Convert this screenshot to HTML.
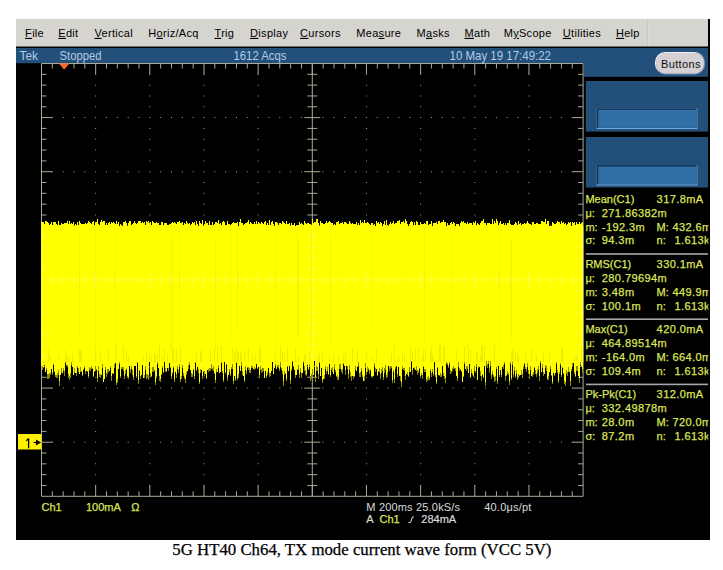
<!DOCTYPE html>
<html><head><meta charset="utf-8"><style>
html,body{margin:0;padding:0;background:#fff;width:723px;height:570px;overflow:hidden}
svg{position:absolute;left:0;top:0;display:block}
</style></head><body>
<svg width="723" height="570" viewBox="0 0 723 570">
<rect x="16" y="19" width="694" height="521" fill="#000"/><rect x="16" y="19" width="692" height="27.5" fill="#d6d4ce"/><rect x="647" y="19" width="1" height="27" fill="#cac8c2"/><rect x="648" y="19" width="1" height="27" fill="#dcdad4"/><rect x="16" y="48" width="692" height="15.2" fill="#22507a"/><rect x="583.8" y="48" width="124.2" height="28.8" fill="#22507a"/><rect x="585.8" y="81" width="122.2" height="50.599999999999994" fill="#22507a"/><rect x="596.6" y="108.3" width="100.8" height="20.700000000000003" fill="#70a8e0"/><rect x="596.6" y="108.3" width="100" height="19.500000000000004" fill="#173a60"/><rect x="598.4" y="110.0" width="98.2" height="17.800000000000004" fill="#3070a8"/><rect x="585.8" y="137" width="122.2" height="50.5" fill="#22507a"/><rect x="596.6" y="165" width="100.8" height="20.5" fill="#70a8e0"/><rect x="596.6" y="165" width="100" height="19.3" fill="#173a60"/><rect x="598.4" y="166.7" width="98.2" height="17.6" fill="#3070a8"/><rect x="655.5" y="52.5" width="49.5" height="22" rx="10" ry="10" fill="#4a6a90"/><rect x="655" y="52" width="49.5" height="22" rx="10" ry="10" fill="#f0f0f4"/><rect x="656" y="53" width="49" height="21.5" rx="10" ry="10" fill="#7a8aa0"/><rect x="656" y="53" width="48" height="20.5" rx="9.5" ry="9.5" fill="#d4d0d4"/><path d="M41.5 63.5H583.0999999999999V496.3H41.5ZM312.29999999999995 63.5V496.3M41.5 279.9H583.0999999999999M52.33 63.5v5M52.33 496.3v-5M52.33 274.9v10M63.16 63.5v5M63.16 496.3v-5M63.16 274.9v10M74.00 63.5v5M74.00 496.3v-5M74.00 274.9v10M84.83 63.5v5M84.83 496.3v-5M84.83 274.9v10M95.66 63.5v11M95.66 496.3v-11M95.66 271.9v16M106.49 63.5v5M106.49 496.3v-5M106.49 274.9v10M117.32 63.5v5M117.32 496.3v-5M117.32 274.9v10M128.16 63.5v5M128.16 496.3v-5M128.16 274.9v10M138.99 63.5v5M138.99 496.3v-5M138.99 274.9v10M149.82 63.5v11M149.82 496.3v-11M149.82 271.9v16M160.65 63.5v5M160.65 496.3v-5M160.65 274.9v10M171.48 63.5v5M171.48 496.3v-5M171.48 274.9v10M182.32 63.5v5M182.32 496.3v-5M182.32 274.9v10M193.15 63.5v5M193.15 496.3v-5M193.15 274.9v10M203.98 63.5v11M203.98 496.3v-11M203.98 271.9v16M214.81 63.5v5M214.81 496.3v-5M214.81 274.9v10M225.64 63.5v5M225.64 496.3v-5M225.64 274.9v10M236.48 63.5v5M236.48 496.3v-5M236.48 274.9v10M247.31 63.5v5M247.31 496.3v-5M247.31 274.9v10M258.14 63.5v11M258.14 496.3v-11M258.14 271.9v16M268.97 63.5v5M268.97 496.3v-5M268.97 274.9v10M279.80 63.5v5M279.80 496.3v-5M279.80 274.9v10M290.64 63.5v5M290.64 496.3v-5M290.64 274.9v10M301.47 63.5v5M301.47 496.3v-5M301.47 274.9v10M312.30 63.5v11M312.30 496.3v-11M312.30 271.9v16M323.13 63.5v5M323.13 496.3v-5M323.13 274.9v10M333.96 63.5v5M333.96 496.3v-5M333.96 274.9v10M344.80 63.5v5M344.80 496.3v-5M344.80 274.9v10M355.63 63.5v5M355.63 496.3v-5M355.63 274.9v10M366.46 63.5v11M366.46 496.3v-11M366.46 271.9v16M377.29 63.5v5M377.29 496.3v-5M377.29 274.9v10M388.12 63.5v5M388.12 496.3v-5M388.12 274.9v10M398.96 63.5v5M398.96 496.3v-5M398.96 274.9v10M409.79 63.5v5M409.79 496.3v-5M409.79 274.9v10M420.62 63.5v11M420.62 496.3v-11M420.62 271.9v16M431.45 63.5v5M431.45 496.3v-5M431.45 274.9v10M442.28 63.5v5M442.28 496.3v-5M442.28 274.9v10M453.12 63.5v5M453.12 496.3v-5M453.12 274.9v10M463.95 63.5v5M463.95 496.3v-5M463.95 274.9v10M474.78 63.5v11M474.78 496.3v-11M474.78 271.9v16M485.61 63.5v5M485.61 496.3v-5M485.61 274.9v10M496.44 63.5v5M496.44 496.3v-5M496.44 274.9v10M507.28 63.5v5M507.28 496.3v-5M507.28 274.9v10M518.11 63.5v5M518.11 496.3v-5M518.11 274.9v10M528.94 63.5v11M528.94 496.3v-11M528.94 271.9v16M539.77 63.5v5M539.77 496.3v-5M539.77 274.9v10M550.60 63.5v5M550.60 496.3v-5M550.60 274.9v10M561.44 63.5v5M561.44 496.3v-5M561.44 274.9v10M572.27 63.5v5M572.27 496.3v-5M572.27 274.9v10M41.5 74.32h5M583.0999999999999 74.32h-5M307.29999999999995 74.32h10M41.5 85.14h5M583.0999999999999 85.14h-5M307.29999999999995 85.14h10M41.5 95.96h5M583.0999999999999 95.96h-5M307.29999999999995 95.96h10M41.5 106.78h5M583.0999999999999 106.78h-5M307.29999999999995 106.78h10M41.5 117.60h11M583.0999999999999 117.60h-11M304.29999999999995 117.60h16M41.5 128.42h5M583.0999999999999 128.42h-5M307.29999999999995 128.42h10M41.5 139.24h5M583.0999999999999 139.24h-5M307.29999999999995 139.24h10M41.5 150.06h5M583.0999999999999 150.06h-5M307.29999999999995 150.06h10M41.5 160.88h5M583.0999999999999 160.88h-5M307.29999999999995 160.88h10M41.5 171.70h11M583.0999999999999 171.70h-11M304.29999999999995 171.70h16M41.5 182.52h5M583.0999999999999 182.52h-5M307.29999999999995 182.52h10M41.5 193.34h5M583.0999999999999 193.34h-5M307.29999999999995 193.34h10M41.5 204.16h5M583.0999999999999 204.16h-5M307.29999999999995 204.16h10M41.5 214.98h5M583.0999999999999 214.98h-5M307.29999999999995 214.98h10M41.5 225.80h11M583.0999999999999 225.80h-11M304.29999999999995 225.80h16M41.5 236.62h5M583.0999999999999 236.62h-5M307.29999999999995 236.62h10M41.5 247.44h5M583.0999999999999 247.44h-5M307.29999999999995 247.44h10M41.5 258.26h5M583.0999999999999 258.26h-5M307.29999999999995 258.26h10M41.5 269.08h5M583.0999999999999 269.08h-5M307.29999999999995 269.08h10M41.5 279.90h11M583.0999999999999 279.90h-11M304.29999999999995 279.90h16M41.5 290.72h5M583.0999999999999 290.72h-5M307.29999999999995 290.72h10M41.5 301.54h5M583.0999999999999 301.54h-5M307.29999999999995 301.54h10M41.5 312.36h5M583.0999999999999 312.36h-5M307.29999999999995 312.36h10M41.5 323.18h5M583.0999999999999 323.18h-5M307.29999999999995 323.18h10M41.5 334.00h11M583.0999999999999 334.00h-11M304.29999999999995 334.00h16M41.5 344.82h5M583.0999999999999 344.82h-5M307.29999999999995 344.82h10M41.5 355.64h5M583.0999999999999 355.64h-5M307.29999999999995 355.64h10M41.5 366.46h5M583.0999999999999 366.46h-5M307.29999999999995 366.46h10M41.5 377.28h5M583.0999999999999 377.28h-5M307.29999999999995 377.28h10M41.5 388.10h11M583.0999999999999 388.10h-11M304.29999999999995 388.10h16M41.5 398.92h5M583.0999999999999 398.92h-5M307.29999999999995 398.92h10M41.5 409.74h5M583.0999999999999 409.74h-5M307.29999999999995 409.74h10M41.5 420.56h5M583.0999999999999 420.56h-5M307.29999999999995 420.56h10M41.5 431.38h5M583.0999999999999 431.38h-5M307.29999999999995 431.38h10M41.5 442.20h11M583.0999999999999 442.20h-11M304.29999999999995 442.20h16M41.5 453.02h5M583.0999999999999 453.02h-5M307.29999999999995 453.02h10M41.5 463.84h5M583.0999999999999 463.84h-5M307.29999999999995 463.84h10M41.5 474.66h5M583.0999999999999 474.66h-5M307.29999999999995 474.66h10M41.5 485.48h5M583.0999999999999 485.48h-5M307.29999999999995 485.48h10" stroke="#aaaa96" stroke-width="1.0" fill="none"/><path d="M95.16 73.82h1v1h-1zM95.16 84.64h1v1h-1zM95.16 95.46h1v1h-1zM95.16 106.28h1v1h-1zM95.16 127.92h1v1h-1zM95.16 138.74h1v1h-1zM95.16 149.56h1v1h-1zM95.16 160.38h1v1h-1zM95.16 182.02h1v1h-1zM95.16 192.84h1v1h-1zM95.16 203.66h1v1h-1zM95.16 214.48h1v1h-1zM95.16 236.12h1v1h-1zM95.16 246.94h1v1h-1zM95.16 257.76h1v1h-1zM95.16 268.58h1v1h-1zM95.16 290.22h1v1h-1zM95.16 301.04h1v1h-1zM95.16 311.86h1v1h-1zM95.16 322.68h1v1h-1zM95.16 344.32h1v1h-1zM95.16 355.14h1v1h-1zM95.16 365.96h1v1h-1zM95.16 376.78h1v1h-1zM95.16 398.42h1v1h-1zM95.16 409.24h1v1h-1zM95.16 420.06h1v1h-1zM95.16 430.88h1v1h-1zM95.16 452.52h1v1h-1zM95.16 463.34h1v1h-1zM95.16 474.16h1v1h-1zM95.16 484.98h1v1h-1zM149.32 73.82h1v1h-1zM149.32 84.64h1v1h-1zM149.32 95.46h1v1h-1zM149.32 106.28h1v1h-1zM149.32 127.92h1v1h-1zM149.32 138.74h1v1h-1zM149.32 149.56h1v1h-1zM149.32 160.38h1v1h-1zM149.32 182.02h1v1h-1zM149.32 192.84h1v1h-1zM149.32 203.66h1v1h-1zM149.32 214.48h1v1h-1zM149.32 236.12h1v1h-1zM149.32 246.94h1v1h-1zM149.32 257.76h1v1h-1zM149.32 268.58h1v1h-1zM149.32 290.22h1v1h-1zM149.32 301.04h1v1h-1zM149.32 311.86h1v1h-1zM149.32 322.68h1v1h-1zM149.32 344.32h1v1h-1zM149.32 355.14h1v1h-1zM149.32 365.96h1v1h-1zM149.32 376.78h1v1h-1zM149.32 398.42h1v1h-1zM149.32 409.24h1v1h-1zM149.32 420.06h1v1h-1zM149.32 430.88h1v1h-1zM149.32 452.52h1v1h-1zM149.32 463.34h1v1h-1zM149.32 474.16h1v1h-1zM149.32 484.98h1v1h-1zM203.48 73.82h1v1h-1zM203.48 84.64h1v1h-1zM203.48 95.46h1v1h-1zM203.48 106.28h1v1h-1zM203.48 127.92h1v1h-1zM203.48 138.74h1v1h-1zM203.48 149.56h1v1h-1zM203.48 160.38h1v1h-1zM203.48 182.02h1v1h-1zM203.48 192.84h1v1h-1zM203.48 203.66h1v1h-1zM203.48 214.48h1v1h-1zM203.48 236.12h1v1h-1zM203.48 246.94h1v1h-1zM203.48 257.76h1v1h-1zM203.48 268.58h1v1h-1zM203.48 290.22h1v1h-1zM203.48 301.04h1v1h-1zM203.48 311.86h1v1h-1zM203.48 322.68h1v1h-1zM203.48 344.32h1v1h-1zM203.48 355.14h1v1h-1zM203.48 365.96h1v1h-1zM203.48 376.78h1v1h-1zM203.48 398.42h1v1h-1zM203.48 409.24h1v1h-1zM203.48 420.06h1v1h-1zM203.48 430.88h1v1h-1zM203.48 452.52h1v1h-1zM203.48 463.34h1v1h-1zM203.48 474.16h1v1h-1zM203.48 484.98h1v1h-1zM257.64 73.82h1v1h-1zM257.64 84.64h1v1h-1zM257.64 95.46h1v1h-1zM257.64 106.28h1v1h-1zM257.64 127.92h1v1h-1zM257.64 138.74h1v1h-1zM257.64 149.56h1v1h-1zM257.64 160.38h1v1h-1zM257.64 182.02h1v1h-1zM257.64 192.84h1v1h-1zM257.64 203.66h1v1h-1zM257.64 214.48h1v1h-1zM257.64 236.12h1v1h-1zM257.64 246.94h1v1h-1zM257.64 257.76h1v1h-1zM257.64 268.58h1v1h-1zM257.64 290.22h1v1h-1zM257.64 301.04h1v1h-1zM257.64 311.86h1v1h-1zM257.64 322.68h1v1h-1zM257.64 344.32h1v1h-1zM257.64 355.14h1v1h-1zM257.64 365.96h1v1h-1zM257.64 376.78h1v1h-1zM257.64 398.42h1v1h-1zM257.64 409.24h1v1h-1zM257.64 420.06h1v1h-1zM257.64 430.88h1v1h-1zM257.64 452.52h1v1h-1zM257.64 463.34h1v1h-1zM257.64 474.16h1v1h-1zM257.64 484.98h1v1h-1zM365.96 73.82h1v1h-1zM365.96 84.64h1v1h-1zM365.96 95.46h1v1h-1zM365.96 106.28h1v1h-1zM365.96 127.92h1v1h-1zM365.96 138.74h1v1h-1zM365.96 149.56h1v1h-1zM365.96 160.38h1v1h-1zM365.96 182.02h1v1h-1zM365.96 192.84h1v1h-1zM365.96 203.66h1v1h-1zM365.96 214.48h1v1h-1zM365.96 236.12h1v1h-1zM365.96 246.94h1v1h-1zM365.96 257.76h1v1h-1zM365.96 268.58h1v1h-1zM365.96 290.22h1v1h-1zM365.96 301.04h1v1h-1zM365.96 311.86h1v1h-1zM365.96 322.68h1v1h-1zM365.96 344.32h1v1h-1zM365.96 355.14h1v1h-1zM365.96 365.96h1v1h-1zM365.96 376.78h1v1h-1zM365.96 398.42h1v1h-1zM365.96 409.24h1v1h-1zM365.96 420.06h1v1h-1zM365.96 430.88h1v1h-1zM365.96 452.52h1v1h-1zM365.96 463.34h1v1h-1zM365.96 474.16h1v1h-1zM365.96 484.98h1v1h-1zM420.12 73.82h1v1h-1zM420.12 84.64h1v1h-1zM420.12 95.46h1v1h-1zM420.12 106.28h1v1h-1zM420.12 127.92h1v1h-1zM420.12 138.74h1v1h-1zM420.12 149.56h1v1h-1zM420.12 160.38h1v1h-1zM420.12 182.02h1v1h-1zM420.12 192.84h1v1h-1zM420.12 203.66h1v1h-1zM420.12 214.48h1v1h-1zM420.12 236.12h1v1h-1zM420.12 246.94h1v1h-1zM420.12 257.76h1v1h-1zM420.12 268.58h1v1h-1zM420.12 290.22h1v1h-1zM420.12 301.04h1v1h-1zM420.12 311.86h1v1h-1zM420.12 322.68h1v1h-1zM420.12 344.32h1v1h-1zM420.12 355.14h1v1h-1zM420.12 365.96h1v1h-1zM420.12 376.78h1v1h-1zM420.12 398.42h1v1h-1zM420.12 409.24h1v1h-1zM420.12 420.06h1v1h-1zM420.12 430.88h1v1h-1zM420.12 452.52h1v1h-1zM420.12 463.34h1v1h-1zM420.12 474.16h1v1h-1zM420.12 484.98h1v1h-1zM474.28 73.82h1v1h-1zM474.28 84.64h1v1h-1zM474.28 95.46h1v1h-1zM474.28 106.28h1v1h-1zM474.28 127.92h1v1h-1zM474.28 138.74h1v1h-1zM474.28 149.56h1v1h-1zM474.28 160.38h1v1h-1zM474.28 182.02h1v1h-1zM474.28 192.84h1v1h-1zM474.28 203.66h1v1h-1zM474.28 214.48h1v1h-1zM474.28 236.12h1v1h-1zM474.28 246.94h1v1h-1zM474.28 257.76h1v1h-1zM474.28 268.58h1v1h-1zM474.28 290.22h1v1h-1zM474.28 301.04h1v1h-1zM474.28 311.86h1v1h-1zM474.28 322.68h1v1h-1zM474.28 344.32h1v1h-1zM474.28 355.14h1v1h-1zM474.28 365.96h1v1h-1zM474.28 376.78h1v1h-1zM474.28 398.42h1v1h-1zM474.28 409.24h1v1h-1zM474.28 420.06h1v1h-1zM474.28 430.88h1v1h-1zM474.28 452.52h1v1h-1zM474.28 463.34h1v1h-1zM474.28 474.16h1v1h-1zM474.28 484.98h1v1h-1zM528.44 73.82h1v1h-1zM528.44 84.64h1v1h-1zM528.44 95.46h1v1h-1zM528.44 106.28h1v1h-1zM528.44 127.92h1v1h-1zM528.44 138.74h1v1h-1zM528.44 149.56h1v1h-1zM528.44 160.38h1v1h-1zM528.44 182.02h1v1h-1zM528.44 192.84h1v1h-1zM528.44 203.66h1v1h-1zM528.44 214.48h1v1h-1zM528.44 236.12h1v1h-1zM528.44 246.94h1v1h-1zM528.44 257.76h1v1h-1zM528.44 268.58h1v1h-1zM528.44 290.22h1v1h-1zM528.44 301.04h1v1h-1zM528.44 311.86h1v1h-1zM528.44 322.68h1v1h-1zM528.44 344.32h1v1h-1zM528.44 355.14h1v1h-1zM528.44 365.96h1v1h-1zM528.44 376.78h1v1h-1zM528.44 398.42h1v1h-1zM528.44 409.24h1v1h-1zM528.44 420.06h1v1h-1zM528.44 430.88h1v1h-1zM528.44 452.52h1v1h-1zM528.44 463.34h1v1h-1zM528.44 474.16h1v1h-1zM528.44 484.98h1v1h-1zM51.83 117.10h1v1h-1zM62.66 117.10h1v1h-1zM73.50 117.10h1v1h-1zM84.33 117.10h1v1h-1zM105.99 117.10h1v1h-1zM116.82 117.10h1v1h-1zM127.66 117.10h1v1h-1zM138.49 117.10h1v1h-1zM160.15 117.10h1v1h-1zM170.98 117.10h1v1h-1zM181.82 117.10h1v1h-1zM192.65 117.10h1v1h-1zM214.31 117.10h1v1h-1zM225.14 117.10h1v1h-1zM235.98 117.10h1v1h-1zM246.81 117.10h1v1h-1zM268.47 117.10h1v1h-1zM279.30 117.10h1v1h-1zM290.14 117.10h1v1h-1zM300.97 117.10h1v1h-1zM322.63 117.10h1v1h-1zM333.46 117.10h1v1h-1zM344.30 117.10h1v1h-1zM355.13 117.10h1v1h-1zM376.79 117.10h1v1h-1zM387.62 117.10h1v1h-1zM398.46 117.10h1v1h-1zM409.29 117.10h1v1h-1zM430.95 117.10h1v1h-1zM441.78 117.10h1v1h-1zM452.62 117.10h1v1h-1zM463.45 117.10h1v1h-1zM485.11 117.10h1v1h-1zM495.94 117.10h1v1h-1zM506.78 117.10h1v1h-1zM517.61 117.10h1v1h-1zM539.27 117.10h1v1h-1zM550.10 117.10h1v1h-1zM560.94 117.10h1v1h-1zM571.77 117.10h1v1h-1zM51.83 171.20h1v1h-1zM62.66 171.20h1v1h-1zM73.50 171.20h1v1h-1zM84.33 171.20h1v1h-1zM105.99 171.20h1v1h-1zM116.82 171.20h1v1h-1zM127.66 171.20h1v1h-1zM138.49 171.20h1v1h-1zM160.15 171.20h1v1h-1zM170.98 171.20h1v1h-1zM181.82 171.20h1v1h-1zM192.65 171.20h1v1h-1zM214.31 171.20h1v1h-1zM225.14 171.20h1v1h-1zM235.98 171.20h1v1h-1zM246.81 171.20h1v1h-1zM268.47 171.20h1v1h-1zM279.30 171.20h1v1h-1zM290.14 171.20h1v1h-1zM300.97 171.20h1v1h-1zM322.63 171.20h1v1h-1zM333.46 171.20h1v1h-1zM344.30 171.20h1v1h-1zM355.13 171.20h1v1h-1zM376.79 171.20h1v1h-1zM387.62 171.20h1v1h-1zM398.46 171.20h1v1h-1zM409.29 171.20h1v1h-1zM430.95 171.20h1v1h-1zM441.78 171.20h1v1h-1zM452.62 171.20h1v1h-1zM463.45 171.20h1v1h-1zM485.11 171.20h1v1h-1zM495.94 171.20h1v1h-1zM506.78 171.20h1v1h-1zM517.61 171.20h1v1h-1zM539.27 171.20h1v1h-1zM550.10 171.20h1v1h-1zM560.94 171.20h1v1h-1zM571.77 171.20h1v1h-1zM51.83 225.30h1v1h-1zM62.66 225.30h1v1h-1zM73.50 225.30h1v1h-1zM84.33 225.30h1v1h-1zM105.99 225.30h1v1h-1zM116.82 225.30h1v1h-1zM127.66 225.30h1v1h-1zM138.49 225.30h1v1h-1zM160.15 225.30h1v1h-1zM170.98 225.30h1v1h-1zM181.82 225.30h1v1h-1zM192.65 225.30h1v1h-1zM214.31 225.30h1v1h-1zM225.14 225.30h1v1h-1zM235.98 225.30h1v1h-1zM246.81 225.30h1v1h-1zM268.47 225.30h1v1h-1zM279.30 225.30h1v1h-1zM290.14 225.30h1v1h-1zM300.97 225.30h1v1h-1zM322.63 225.30h1v1h-1zM333.46 225.30h1v1h-1zM344.30 225.30h1v1h-1zM355.13 225.30h1v1h-1zM376.79 225.30h1v1h-1zM387.62 225.30h1v1h-1zM398.46 225.30h1v1h-1zM409.29 225.30h1v1h-1zM430.95 225.30h1v1h-1zM441.78 225.30h1v1h-1zM452.62 225.30h1v1h-1zM463.45 225.30h1v1h-1zM485.11 225.30h1v1h-1zM495.94 225.30h1v1h-1zM506.78 225.30h1v1h-1zM517.61 225.30h1v1h-1zM539.27 225.30h1v1h-1zM550.10 225.30h1v1h-1zM560.94 225.30h1v1h-1zM571.77 225.30h1v1h-1zM51.83 333.50h1v1h-1zM62.66 333.50h1v1h-1zM73.50 333.50h1v1h-1zM84.33 333.50h1v1h-1zM105.99 333.50h1v1h-1zM116.82 333.50h1v1h-1zM127.66 333.50h1v1h-1zM138.49 333.50h1v1h-1zM160.15 333.50h1v1h-1zM170.98 333.50h1v1h-1zM181.82 333.50h1v1h-1zM192.65 333.50h1v1h-1zM214.31 333.50h1v1h-1zM225.14 333.50h1v1h-1zM235.98 333.50h1v1h-1zM246.81 333.50h1v1h-1zM268.47 333.50h1v1h-1zM279.30 333.50h1v1h-1zM290.14 333.50h1v1h-1zM300.97 333.50h1v1h-1zM322.63 333.50h1v1h-1zM333.46 333.50h1v1h-1zM344.30 333.50h1v1h-1zM355.13 333.50h1v1h-1zM376.79 333.50h1v1h-1zM387.62 333.50h1v1h-1zM398.46 333.50h1v1h-1zM409.29 333.50h1v1h-1zM430.95 333.50h1v1h-1zM441.78 333.50h1v1h-1zM452.62 333.50h1v1h-1zM463.45 333.50h1v1h-1zM485.11 333.50h1v1h-1zM495.94 333.50h1v1h-1zM506.78 333.50h1v1h-1zM517.61 333.50h1v1h-1zM539.27 333.50h1v1h-1zM550.10 333.50h1v1h-1zM560.94 333.50h1v1h-1zM571.77 333.50h1v1h-1zM51.83 387.60h1v1h-1zM62.66 387.60h1v1h-1zM73.50 387.60h1v1h-1zM84.33 387.60h1v1h-1zM105.99 387.60h1v1h-1zM116.82 387.60h1v1h-1zM127.66 387.60h1v1h-1zM138.49 387.60h1v1h-1zM160.15 387.60h1v1h-1zM170.98 387.60h1v1h-1zM181.82 387.60h1v1h-1zM192.65 387.60h1v1h-1zM214.31 387.60h1v1h-1zM225.14 387.60h1v1h-1zM235.98 387.60h1v1h-1zM246.81 387.60h1v1h-1zM268.47 387.60h1v1h-1zM279.30 387.60h1v1h-1zM290.14 387.60h1v1h-1zM300.97 387.60h1v1h-1zM322.63 387.60h1v1h-1zM333.46 387.60h1v1h-1zM344.30 387.60h1v1h-1zM355.13 387.60h1v1h-1zM376.79 387.60h1v1h-1zM387.62 387.60h1v1h-1zM398.46 387.60h1v1h-1zM409.29 387.60h1v1h-1zM430.95 387.60h1v1h-1zM441.78 387.60h1v1h-1zM452.62 387.60h1v1h-1zM463.45 387.60h1v1h-1zM485.11 387.60h1v1h-1zM495.94 387.60h1v1h-1zM506.78 387.60h1v1h-1zM517.61 387.60h1v1h-1zM539.27 387.60h1v1h-1zM550.10 387.60h1v1h-1zM560.94 387.60h1v1h-1zM571.77 387.60h1v1h-1zM51.83 441.70h1v1h-1zM62.66 441.70h1v1h-1zM73.50 441.70h1v1h-1zM84.33 441.70h1v1h-1zM105.99 441.70h1v1h-1zM116.82 441.70h1v1h-1zM127.66 441.70h1v1h-1zM138.49 441.70h1v1h-1zM160.15 441.70h1v1h-1zM170.98 441.70h1v1h-1zM181.82 441.70h1v1h-1zM192.65 441.70h1v1h-1zM214.31 441.70h1v1h-1zM225.14 441.70h1v1h-1zM235.98 441.70h1v1h-1zM246.81 441.70h1v1h-1zM268.47 441.70h1v1h-1zM279.30 441.70h1v1h-1zM290.14 441.70h1v1h-1zM300.97 441.70h1v1h-1zM322.63 441.70h1v1h-1zM333.46 441.70h1v1h-1zM344.30 441.70h1v1h-1zM355.13 441.70h1v1h-1zM376.79 441.70h1v1h-1zM387.62 441.70h1v1h-1zM398.46 441.70h1v1h-1zM409.29 441.70h1v1h-1zM430.95 441.70h1v1h-1zM441.78 441.70h1v1h-1zM452.62 441.70h1v1h-1zM463.45 441.70h1v1h-1zM485.11 441.70h1v1h-1zM495.94 441.70h1v1h-1zM506.78 441.70h1v1h-1zM517.61 441.70h1v1h-1zM539.27 441.70h1v1h-1zM550.10 441.70h1v1h-1zM560.94 441.70h1v1h-1zM571.77 441.70h1v1h-1zM95.16 117.10h1v1h-1zM95.16 171.20h1v1h-1zM95.16 225.30h1v1h-1zM95.16 333.50h1v1h-1zM95.16 387.60h1v1h-1zM95.16 441.70h1v1h-1zM149.32 117.10h1v1h-1zM149.32 171.20h1v1h-1zM149.32 225.30h1v1h-1zM149.32 333.50h1v1h-1zM149.32 387.60h1v1h-1zM149.32 441.70h1v1h-1zM203.48 117.10h1v1h-1zM203.48 171.20h1v1h-1zM203.48 225.30h1v1h-1zM203.48 333.50h1v1h-1zM203.48 387.60h1v1h-1zM203.48 441.70h1v1h-1zM257.64 117.10h1v1h-1zM257.64 171.20h1v1h-1zM257.64 225.30h1v1h-1zM257.64 333.50h1v1h-1zM257.64 387.60h1v1h-1zM257.64 441.70h1v1h-1zM365.96 117.10h1v1h-1zM365.96 171.20h1v1h-1zM365.96 225.30h1v1h-1zM365.96 333.50h1v1h-1zM365.96 387.60h1v1h-1zM365.96 441.70h1v1h-1zM420.12 117.10h1v1h-1zM420.12 171.20h1v1h-1zM420.12 225.30h1v1h-1zM420.12 333.50h1v1h-1zM420.12 387.60h1v1h-1zM420.12 441.70h1v1h-1zM474.28 117.10h1v1h-1zM474.28 171.20h1v1h-1zM474.28 225.30h1v1h-1zM474.28 333.50h1v1h-1zM474.28 387.60h1v1h-1zM474.28 441.70h1v1h-1zM528.44 117.10h1v1h-1zM528.44 171.20h1v1h-1zM528.44 225.30h1v1h-1zM528.44 333.50h1v1h-1zM528.44 387.60h1v1h-1zM528.44 441.70h1v1h-1z" fill="#a0a090"/><path d="M42.5 366V370M43.5 367V368M46.5 368V370M47.5 374V379M48.5 374V379M49.5 373V378M50.5 373V375M52.5 373V375M53.5 364V365M55.5 375V377M56.5 375V378M57.5 373V378M58.5 370V375M59.5 381V386M61.5 368V373M63.5 368V371M64.5 371V376M65.5 362V363M66.5 365V366M67.5 365V367M68.5 374V378M69.5 376V380M70.5 373V378M71.5 362V365M74.5 368V373M76.5 373V376M77.5 366V368M78.5 368V372M80.5 367V372M81.5 371V372M82.5 375V376M83.5 369V370M84.5 366V368M85.5 371V374M87.5 371V372M88.5 376V378M89.5 367V370M90.5 368V371M91.5 366V369M92.5 368V369M93.5 376V377M94.5 371V372M95.5 366V371M96.5 369V370M97.5 378V382M98.5 366V371M99.5 374V377M100.5 374V378M102.5 364V368M105.5 367V370M106.5 373V377M107.5 369V374M108.5 369V372M110.5 366V368M111.5 376V381M112.5 373V374M113.5 373V374M114.5 364V368M116.5 382V385M117.5 379V383M119.5 362V364M120.5 376V378M121.5 367V369M122.5 367V369M123.5 367V371M124.5 376V379M125.5 370V374M126.5 368V370M127.5 376V378M128.5 377V379M130.5 369V373M131.5 366V369M132.5 370V375M133.5 377V380M136.5 376V378M137.5 362V363M138.5 380V384M139.5 370V371M140.5 376V379M144.5 375V378M145.5 366V370M146.5 374V379M147.5 374V378M148.5 375V380M149.5 361V362M150.5 373V377M151.5 376V377M152.5 367V372M153.5 367V372M154.5 370V371M155.5 382V385M156.5 376V378M157.5 362V364M159.5 376V381M160.5 379V382M161.5 374V375M162.5 366V368M163.5 372V373M164.5 361V362M165.5 368V372M166.5 371V372M168.5 368V371M170.5 367V368M171.5 376V379M172.5 372V374M173.5 366V368M174.5 379V382M176.5 374V378M177.5 366V369M178.5 370V373M179.5 364V367M180.5 379V382M181.5 376V379M182.5 365V368M183.5 373V376M184.5 377V379M185.5 379V383M186.5 372V375M188.5 365V369M189.5 362V365M191.5 373V377M192.5 374V377M193.5 369V370M194.5 376V379M195.5 362V363M196.5 370V371M198.5 369V373M199.5 382V384M200.5 369V373M202.5 376V379M203.5 371V372M204.5 371V376M206.5 378V379M208.5 369V372M209.5 368V371M210.5 368V371M211.5 364V369M212.5 368V370M213.5 366V371M214.5 373V374M215.5 380V383M216.5 369V372M218.5 365V368M221.5 361V363M222.5 371V373M223.5 380V382M225.5 372V374M226.5 364V365M227.5 377V381M229.5 369V372M230.5 374V376M231.5 367V369M232.5 364V369M233.5 381V384M235.5 379V381M236.5 362V363M237.5 378V380M238.5 374V378M241.5 362V366M242.5 371V375M244.5 380V382M245.5 366V370M246.5 371V374M247.5 367V368M248.5 367V370M249.5 368V373M250.5 370V373M251.5 366V368M252.5 366V368M254.5 367V370M255.5 368V369M257.5 368V369M259.5 375V378M260.5 366V370M261.5 369V373M262.5 368V372M263.5 368V371M266.5 376V378M267.5 372V375M269.5 373V377M270.5 373V376M275.5 364V366M277.5 365V367M278.5 365V368M279.5 369V371M280.5 362V367M281.5 368V370M282.5 371V374M283.5 381V386M284.5 371V375M285.5 373V374M286.5 379V381M287.5 366V367M290.5 380V384M291.5 369V371M292.5 361V362M293.5 366V367M295.5 375V378M297.5 369V370M298.5 365V370M299.5 374V378M300.5 368V372M301.5 373V378M303.5 361V363M304.5 366V371M305.5 370V375M306.5 374V376M308.5 369V370M309.5 364V366M310.5 376V381M311.5 374V379M312.5 369V373M315.5 377V382M316.5 366V371M317.5 367V371M318.5 374V379M319.5 362V363M322.5 380V383M324.5 375V379M325.5 366V369M326.5 371V374M327.5 367V371M328.5 374V375M330.5 375V377M331.5 368V370M332.5 367V372M334.5 364V369M335.5 370V372M336.5 376V377M337.5 375V380M338.5 377V380M339.5 364V369M340.5 364V369M341.5 370V372M342.5 369V374M343.5 363V364M345.5 370V375M347.5 366V369M348.5 374V379M349.5 365V370M350.5 372V377M351.5 376V381M353.5 376V379M354.5 376V377M355.5 366V370M358.5 362V366M359.5 373V377M360.5 372V377M361.5 368V371M362.5 375V377M364.5 376V381M365.5 363V368M366.5 372V375M367.5 367V372M368.5 368V370M369.5 370V374M370.5 369V371M371.5 376V377M372.5 376V378M374.5 363V366M375.5 368V372M377.5 375V376M378.5 371V372M379.5 368V372M380.5 374V379M381.5 369V373M382.5 367V371M383.5 377V380M384.5 368V373M385.5 365V370M386.5 375V378M387.5 372V377M389.5 367V371M390.5 366V369M391.5 366V368M392.5 380V383M393.5 370V372M394.5 379V383M395.5 367V369M397.5 374V377M400.5 376V381M401.5 382V387M402.5 366V369M403.5 368V370M404.5 368V371M405.5 376V380M407.5 372V375M408.5 376V377M409.5 367V372M411.5 361V362M412.5 370V375M414.5 367V369M416.5 366V371M417.5 370V375M418.5 371V373M419.5 368V369M420.5 376V377M421.5 373V375M422.5 375V379M423.5 366V367M424.5 369V372M425.5 369V372M426.5 379V382M427.5 377V381M428.5 376V380M429.5 378V380M430.5 369V371M431.5 373V377M432.5 369V372M433.5 374V376M435.5 375V377M436.5 382V384M437.5 367V368M439.5 375V376M440.5 373V377M441.5 375V377M443.5 373V376M444.5 376V379M445.5 378V383M446.5 362V364M447.5 363V365M448.5 366V368M449.5 362V364M450.5 370V374M451.5 371V373M452.5 368V371M453.5 366V369M454.5 368V369M455.5 368V371M457.5 378V381M458.5 362V367M459.5 368V371M460.5 369V370M461.5 371V372M463.5 376V377M464.5 362V364M466.5 366V371M467.5 366V369M470.5 377V378M471.5 369V373M472.5 373V375M473.5 376V377M474.5 366V371M475.5 371V373M476.5 364V367M478.5 366V368M480.5 371V376M481.5 376V381M482.5 374V375M483.5 377V378M485.5 382V386M486.5 361V366M487.5 364V368M488.5 361V364M489.5 368V373M490.5 361V366M491.5 375V379M492.5 371V374M493.5 375V377M494.5 377V382M495.5 376V381M496.5 367V369M497.5 381V384M499.5 375V377M501.5 375V377M503.5 365V369M504.5 362V364M505.5 376V381M506.5 375V376M507.5 371V374M508.5 373V375M509.5 381V385M510.5 362V364M511.5 378V380M512.5 361V365M513.5 374V377M514.5 367V371M515.5 376V378M516.5 370V374M517.5 377V380M518.5 374V378M519.5 375V376M521.5 370V375M522.5 374V378M523.5 366V369M524.5 363V364M525.5 367V369M526.5 369V372M527.5 363V367M528.5 370V374M529.5 374V379M530.5 366V370M532.5 374V377M533.5 372V375M534.5 367V368M535.5 370V374M536.5 374V377M537.5 369V373M538.5 366V370M539.5 376V381M540.5 361V363M542.5 364V368M543.5 372V376M545.5 365V368M546.5 366V371M547.5 378V380M548.5 376V380M550.5 366V369M551.5 375V376M552.5 382V384M554.5 375V376M556.5 362V364M557.5 370V373M558.5 381V383M559.5 372V374M560.5 363V365M561.5 375V377M562.5 367V368M563.5 373V374M564.5 381V384M565.5 382V386M566.5 370V374M567.5 372V376M568.5 367V372M570.5 381V386M571.5 369V371M572.5 363V367M574.5 372V374M575.5 376V377M576.5 366V371M577.5 366V371M579.5 378V383M580.5 362V365M582.5 369V373" stroke="#8c8c00" stroke-width="1" fill="none"/><path d="M41.5 222V366M42.5 222V366M43.5 222V367M44.5 224V365M45.5 221V372M46.5 221V368M47.5 222V374M48.5 223V374M49.5 225V373M50.5 224V373M51.5 222V369M52.5 225V373M53.5 222V364M54.5 222V372M55.5 222V375M56.5 224V375M57.5 225V373M58.5 221V370M59.5 225V381M60.5 225V375M61.5 223V368M62.5 224V373M63.5 224V368M64.5 223V371M65.5 223V362M66.5 223V365M67.5 221V365M68.5 224V374M69.5 221V376M70.5 224V373M71.5 223V362M72.5 224V367M73.5 222V375M74.5 226V368M75.5 224V373M76.5 225V373M77.5 222V366M78.5 225V368M79.5 221V374M80.5 223V367M81.5 224V371M82.5 224V375M83.5 224V369M84.5 224V366M85.5 223V371M86.5 224V371M87.5 223V371M88.5 221V376M89.5 222V367M90.5 223V368M91.5 224V366M92.5 222V368M93.5 221V376M94.5 225V371M95.5 222V366M96.5 222V369M97.5 219V378M98.5 224V366M99.5 225V374M100.5 222V374M101.5 220V375M102.5 222V364M103.5 221V382M104.5 221V379M105.5 225V367M106.5 223V373M107.5 225V369M108.5 223V369M109.5 222V371M110.5 224V366M111.5 222V376M112.5 223V373M113.5 222V373M114.5 223V364M115.5 224V363M116.5 221V382M117.5 224V379M118.5 222V369M119.5 227V362M120.5 224V376M121.5 225V367M122.5 226V367M123.5 222V367M124.5 222V376M125.5 221V370M126.5 223V368M127.5 226V376M128.5 223V377M129.5 221V366M130.5 221V369M131.5 225V366M132.5 224V370M133.5 223V377M134.5 221V366M135.5 223V366M136.5 224V376M137.5 223V362M138.5 221V380M139.5 221V370M140.5 221V376M141.5 223V375M142.5 222V365M143.5 223V378M144.5 222V375M145.5 225V366M146.5 221V374M147.5 222V374M148.5 221V375M149.5 223V361M150.5 222V373M151.5 225V376M152.5 221V367M153.5 222V367M154.5 223V370M155.5 223V382M156.5 222V376M157.5 223V362M158.5 223V368M159.5 225V376M160.5 225V379M161.5 222V374M162.5 222V366M163.5 225V372M164.5 223V361M165.5 223V368M166.5 223V371M167.5 225V368M168.5 225V368M169.5 224V363M170.5 224V367M171.5 223V376M172.5 222V372M173.5 223V366M174.5 222V379M175.5 223V372M176.5 224V374M177.5 222V366M178.5 222V370M179.5 221V364M180.5 223V379M181.5 223V376M182.5 222V365M183.5 225V373M184.5 223V377M185.5 224V379M186.5 221V372M187.5 223V371M188.5 224V365M189.5 223V362M190.5 225V370M191.5 224V373M192.5 222V374M193.5 223V369M194.5 222V376M195.5 225V362M196.5 221V370M197.5 224V367M198.5 226V369M199.5 221V382M200.5 223V369M201.5 224V370M202.5 220V376M203.5 226V371M204.5 224V371M205.5 221V374M206.5 223V378M207.5 223V370M208.5 225V369M209.5 221V368M210.5 225V368M211.5 225V364M212.5 222V368M213.5 225V366M214.5 224V373M215.5 222V380M216.5 222V369M217.5 223V372M218.5 220V365M219.5 224V373M220.5 223V372M221.5 225V361M222.5 222V371M223.5 221V380M224.5 222V362M225.5 225V372M226.5 225V364M227.5 221V377M228.5 224V375M229.5 224V369M230.5 225V374M231.5 224V367M232.5 223V364M233.5 222V381M234.5 223V376M235.5 223V379M236.5 223V362M237.5 222V378M238.5 227V374M239.5 222V366M240.5 219V371M241.5 223V362M242.5 223V371M243.5 225V376M244.5 224V380M245.5 223V366M246.5 223V371M247.5 222V367M248.5 220V367M249.5 224V368M250.5 222V370M251.5 223V366M252.5 224V366M253.5 224V369M254.5 222V367M255.5 224V368M256.5 221V364M257.5 224V368M258.5 222V367M259.5 223V375M260.5 224V366M261.5 222V369M262.5 223V368M263.5 224V368M264.5 222V378M265.5 221V371M266.5 225V376M267.5 223V372M268.5 225V368M269.5 220V373M270.5 225V373M271.5 222V371M272.5 221V362M273.5 224V374M274.5 228V368M275.5 222V364M276.5 222V369M277.5 223V365M278.5 225V365M279.5 223V369M280.5 223V362M281.5 224V368M282.5 221V371M283.5 222V381M284.5 223V371M285.5 224V373M286.5 221V379M287.5 224V366M288.5 224V371M289.5 223V366M290.5 227V380M291.5 223V369M292.5 225V361M293.5 225V366M294.5 223V370M295.5 227V375M296.5 225V375M297.5 225V369M298.5 225V365M299.5 222V374M300.5 224V368M301.5 223V373M302.5 224V373M303.5 225V361M304.5 221V366M305.5 223V370M306.5 224V374M307.5 223V365M308.5 223V369M309.5 224V364M310.5 224V376M311.5 225V374M312.5 219V369M313.5 223V375M314.5 222V361M315.5 222V377M316.5 219V366M317.5 219V367M318.5 223V374M319.5 228V362M320.5 221V376M321.5 223V368M322.5 223V380M323.5 224V379M324.5 224V375M325.5 223V366M326.5 221V371M327.5 223V367M328.5 222V374M329.5 221V364M330.5 222V375M331.5 223V368M332.5 223V367M333.5 225V374M334.5 224V364M335.5 225V370M336.5 222V376M337.5 222V375M338.5 221V377M339.5 224V364M340.5 223V364M341.5 223V370M342.5 222V369M343.5 224V363M344.5 222V366M345.5 222V370M346.5 223V366M347.5 224V366M348.5 224V374M349.5 221V365M350.5 223V372M351.5 224V376M352.5 223V376M353.5 224V376M354.5 224V376M355.5 224V366M356.5 222V371M357.5 225V367M358.5 223V362M359.5 225V373M360.5 220V372M361.5 223V368M362.5 222V375M363.5 223V381M364.5 220V376M365.5 223V363M366.5 223V372M367.5 222V367M368.5 223V368M369.5 224V370M370.5 225V369M371.5 223V376M372.5 223V376M373.5 225V376M374.5 224V363M375.5 227V368M376.5 221V369M377.5 223V375M378.5 222V371M379.5 224V368M380.5 222V374M381.5 223V369M382.5 228V367M383.5 224V377M384.5 221V368M385.5 225V365M386.5 220V375M387.5 225V372M388.5 227V366M389.5 224V367M390.5 222V366M391.5 224V366M392.5 223V380M393.5 221V370M394.5 224V379M395.5 223V367M396.5 223V366M397.5 221V374M398.5 221V367M399.5 220V376M400.5 224V376M401.5 222V382M402.5 222V366M403.5 221V368M404.5 223V368M405.5 219V376M406.5 221V374M407.5 224V372M408.5 228V376M409.5 224V367M410.5 222V372M411.5 221V361M412.5 222V370M413.5 225V368M414.5 222V367M415.5 225V370M416.5 221V366M417.5 222V370M418.5 225V371M419.5 225V368M420.5 222V376M421.5 224V373M422.5 224V375M423.5 224V366M424.5 223V369M425.5 224V369M426.5 221V379M427.5 221V377M428.5 225V376M429.5 224V378M430.5 224V369M431.5 221V373M432.5 227V369M433.5 223V374M434.5 223V362M435.5 223V375M436.5 222V382M437.5 224V367M438.5 221V375M439.5 221V375M440.5 223V373M441.5 222V375M442.5 222V366M443.5 220V373M444.5 222V376M445.5 222V378M446.5 228V362M447.5 223V363M448.5 225V366M449.5 225V362M450.5 223V370M451.5 222V371M452.5 224V368M453.5 222V366M454.5 223V368M455.5 227V368M456.5 224V376M457.5 224V378M458.5 224V362M459.5 228V368M460.5 223V369M461.5 221V371M462.5 222V382M463.5 221V376M464.5 223V362M465.5 223V369M466.5 224V366M467.5 222V366M468.5 224V373M469.5 223V364M470.5 223V377M471.5 223V369M472.5 225V373M473.5 222V376M474.5 223V366M475.5 221V371M476.5 225V364M477.5 223V380M478.5 224V366M479.5 225V367M480.5 223V371M481.5 221V376M482.5 221V374M483.5 219V377M484.5 223V366M485.5 223V382M486.5 225V361M487.5 223V364M488.5 223V361M489.5 223V368M490.5 224V361M491.5 224V375M492.5 219V371M493.5 224V375M494.5 221V377M495.5 223V376M496.5 219V367M497.5 221V381M498.5 225V366M499.5 223V375M500.5 221V370M501.5 224V375M502.5 224V367M503.5 223V365M504.5 225V362M505.5 223V376M506.5 225V375M507.5 223V371M508.5 223V373M509.5 220V381M510.5 224V362M511.5 225V378M512.5 225V361M513.5 225V374M514.5 224V367M515.5 222V376M516.5 223V370M517.5 225V377M518.5 221V374M519.5 224V375M520.5 223V375M521.5 225V370M522.5 224V374M523.5 224V366M524.5 223V363M525.5 224V367M526.5 223V369M527.5 221V363M528.5 223V370M529.5 224V374M530.5 224V366M531.5 225V376M532.5 222V374M533.5 222V372M534.5 224V367M535.5 224V370M536.5 223V374M537.5 223V369M538.5 224V366M539.5 224V376M540.5 224V361M541.5 221V372M542.5 221V364M543.5 222V372M544.5 222V374M545.5 219V365M546.5 224V366M547.5 221V378M548.5 221V376M549.5 226V372M550.5 228V366M551.5 226V375M552.5 222V382M553.5 223V373M554.5 224V375M555.5 224V373M556.5 223V362M557.5 221V370M558.5 222V381M559.5 222V372M560.5 224V363M561.5 221V375M562.5 223V367M563.5 222V373M564.5 224V381M565.5 223V382M566.5 225V370M567.5 224V372M568.5 222V367M569.5 223V372M570.5 222V381M571.5 226V369M572.5 222V363M573.5 223V363M574.5 222V372M575.5 225V376M576.5 222V366M577.5 224V366M578.5 224V376M579.5 222V378M580.5 224V362M581.5 223V366M582.5 222V369" stroke="#ffff00" stroke-width="1" fill="none"/><rect x="41" y="226" width="542.1" height="135" fill="#ffff00"/><path d="M79.5 233V336M95.5 232V356M115.5 235V357M170.5 240V351M172.5 235V344M179.5 231V334M215.5 239V351M230.5 226V342M237.5 231V330M275.5 236V353M297.5 227V334M298.5 240V339M311.5 229V351M330.5 235V346M371.5 229V330M424.5 227V343M452.5 232V334M499.5 232V349M510.5 240V343M511.5 238V337" stroke="#f4f400" stroke-width="1" fill="none"/><path d="M48.5 350V362M50.5 356V362M58.5 355V362M65.5 350V362M66.5 355V362M67.5 356V362M69.5 356V362M72.5 354V362M79.5 349V362M80.5 349V362M81.5 350V362M95.5 350V362M100.5 350V362M108.5 349V362M116.5 346V362M123.5 346V362M126.5 351V362M128.5 355V362M143.5 355V362M146.5 353V362M149.5 353V362M151.5 356V362M154.5 352V362M155.5 354V362M157.5 354V362M159.5 346V362M162.5 356V362M164.5 349V362M167.5 354V362M172.5 345V362M173.5 349V362M176.5 349V362M180.5 345V362M196.5 351V362M200.5 353V362M201.5 348V362M210.5 350V362M214.5 348V362M217.5 346V362M221.5 346V362M232.5 348V362M234.5 354V362M235.5 348V362M237.5 350V362M238.5 352V362M240.5 351V362M241.5 354V362M244.5 350V362M248.5 347V362M252.5 354V362M255.5 355V362M259.5 345V362M260.5 350V362M275.5 355V362M280.5 345V362M282.5 351V362M284.5 354V362M287.5 349V362M295.5 347V362M298.5 356V362M304.5 355V362M305.5 353V362M309.5 352V362M317.5 356V362M319.5 353V362M322.5 352V362M329.5 355V362M333.5 354V362M338.5 356V362M343.5 353V362M345.5 353V362M352.5 347V362M357.5 351V362M366.5 353V362M372.5 356V362M376.5 347V362M391.5 354V362M394.5 346V362M398.5 355V362M402.5 352V362M404.5 355V362M410.5 345V362M412.5 351V362M415.5 349V362M418.5 348V362M422.5 356V362M423.5 350V362M425.5 348V362M430.5 351V362M431.5 347V362M432.5 354V362M433.5 356V362M439.5 346V362M440.5 345V362M443.5 345V362M444.5 347V362M456.5 350V362M464.5 347V362M468.5 345V362M470.5 350V362M476.5 351V362M477.5 353V362M480.5 356V362M481.5 347V362M482.5 345V362M484.5 346V362M494.5 345V362M511.5 353V362M512.5 350V362M513.5 348V362M515.5 352V362M517.5 354V362M518.5 355V362M525.5 352V362M531.5 349V362M536.5 355V362M543.5 352V362M549.5 350V362M561.5 347V362M562.5 347V362M574.5 355V362M576.5 355V362M581.5 349V362" stroke="#ecec00" stroke-width="1" fill="none"/><path d="M41.5 63.5H583.0999999999999V496.3H41.5ZM312.29999999999995 63.5V496.3M41.5 279.9H583.0999999999999M52.33 63.5v5M52.33 496.3v-5M52.33 274.9v10M63.16 63.5v5M63.16 496.3v-5M63.16 274.9v10M74.00 63.5v5M74.00 496.3v-5M74.00 274.9v10M84.83 63.5v5M84.83 496.3v-5M84.83 274.9v10M95.66 63.5v11M95.66 496.3v-11M95.66 271.9v16M106.49 63.5v5M106.49 496.3v-5M106.49 274.9v10M117.32 63.5v5M117.32 496.3v-5M117.32 274.9v10M128.16 63.5v5M128.16 496.3v-5M128.16 274.9v10M138.99 63.5v5M138.99 496.3v-5M138.99 274.9v10M149.82 63.5v11M149.82 496.3v-11M149.82 271.9v16M160.65 63.5v5M160.65 496.3v-5M160.65 274.9v10M171.48 63.5v5M171.48 496.3v-5M171.48 274.9v10M182.32 63.5v5M182.32 496.3v-5M182.32 274.9v10M193.15 63.5v5M193.15 496.3v-5M193.15 274.9v10M203.98 63.5v11M203.98 496.3v-11M203.98 271.9v16M214.81 63.5v5M214.81 496.3v-5M214.81 274.9v10M225.64 63.5v5M225.64 496.3v-5M225.64 274.9v10M236.48 63.5v5M236.48 496.3v-5M236.48 274.9v10M247.31 63.5v5M247.31 496.3v-5M247.31 274.9v10M258.14 63.5v11M258.14 496.3v-11M258.14 271.9v16M268.97 63.5v5M268.97 496.3v-5M268.97 274.9v10M279.80 63.5v5M279.80 496.3v-5M279.80 274.9v10M290.64 63.5v5M290.64 496.3v-5M290.64 274.9v10M301.47 63.5v5M301.47 496.3v-5M301.47 274.9v10M312.30 63.5v11M312.30 496.3v-11M312.30 271.9v16M323.13 63.5v5M323.13 496.3v-5M323.13 274.9v10M333.96 63.5v5M333.96 496.3v-5M333.96 274.9v10M344.80 63.5v5M344.80 496.3v-5M344.80 274.9v10M355.63 63.5v5M355.63 496.3v-5M355.63 274.9v10M366.46 63.5v11M366.46 496.3v-11M366.46 271.9v16M377.29 63.5v5M377.29 496.3v-5M377.29 274.9v10M388.12 63.5v5M388.12 496.3v-5M388.12 274.9v10M398.96 63.5v5M398.96 496.3v-5M398.96 274.9v10M409.79 63.5v5M409.79 496.3v-5M409.79 274.9v10M420.62 63.5v11M420.62 496.3v-11M420.62 271.9v16M431.45 63.5v5M431.45 496.3v-5M431.45 274.9v10M442.28 63.5v5M442.28 496.3v-5M442.28 274.9v10M453.12 63.5v5M453.12 496.3v-5M453.12 274.9v10M463.95 63.5v5M463.95 496.3v-5M463.95 274.9v10M474.78 63.5v11M474.78 496.3v-11M474.78 271.9v16M485.61 63.5v5M485.61 496.3v-5M485.61 274.9v10M496.44 63.5v5M496.44 496.3v-5M496.44 274.9v10M507.28 63.5v5M507.28 496.3v-5M507.28 274.9v10M518.11 63.5v5M518.11 496.3v-5M518.11 274.9v10M528.94 63.5v11M528.94 496.3v-11M528.94 271.9v16M539.77 63.5v5M539.77 496.3v-5M539.77 274.9v10M550.60 63.5v5M550.60 496.3v-5M550.60 274.9v10M561.44 63.5v5M561.44 496.3v-5M561.44 274.9v10M572.27 63.5v5M572.27 496.3v-5M572.27 274.9v10M41.5 74.32h5M583.0999999999999 74.32h-5M307.29999999999995 74.32h10M41.5 85.14h5M583.0999999999999 85.14h-5M307.29999999999995 85.14h10M41.5 95.96h5M583.0999999999999 95.96h-5M307.29999999999995 95.96h10M41.5 106.78h5M583.0999999999999 106.78h-5M307.29999999999995 106.78h10M41.5 117.60h11M583.0999999999999 117.60h-11M304.29999999999995 117.60h16M41.5 128.42h5M583.0999999999999 128.42h-5M307.29999999999995 128.42h10M41.5 139.24h5M583.0999999999999 139.24h-5M307.29999999999995 139.24h10M41.5 150.06h5M583.0999999999999 150.06h-5M307.29999999999995 150.06h10M41.5 160.88h5M583.0999999999999 160.88h-5M307.29999999999995 160.88h10M41.5 171.70h11M583.0999999999999 171.70h-11M304.29999999999995 171.70h16M41.5 182.52h5M583.0999999999999 182.52h-5M307.29999999999995 182.52h10M41.5 193.34h5M583.0999999999999 193.34h-5M307.29999999999995 193.34h10M41.5 204.16h5M583.0999999999999 204.16h-5M307.29999999999995 204.16h10M41.5 214.98h5M583.0999999999999 214.98h-5M307.29999999999995 214.98h10M41.5 225.80h11M583.0999999999999 225.80h-11M304.29999999999995 225.80h16M41.5 236.62h5M583.0999999999999 236.62h-5M307.29999999999995 236.62h10M41.5 247.44h5M583.0999999999999 247.44h-5M307.29999999999995 247.44h10M41.5 258.26h5M583.0999999999999 258.26h-5M307.29999999999995 258.26h10M41.5 269.08h5M583.0999999999999 269.08h-5M307.29999999999995 269.08h10M41.5 279.90h11M583.0999999999999 279.90h-11M304.29999999999995 279.90h16M41.5 290.72h5M583.0999999999999 290.72h-5M307.29999999999995 290.72h10M41.5 301.54h5M583.0999999999999 301.54h-5M307.29999999999995 301.54h10M41.5 312.36h5M583.0999999999999 312.36h-5M307.29999999999995 312.36h10M41.5 323.18h5M583.0999999999999 323.18h-5M307.29999999999995 323.18h10M41.5 334.00h11M583.0999999999999 334.00h-11M304.29999999999995 334.00h16M41.5 344.82h5M583.0999999999999 344.82h-5M307.29999999999995 344.82h10M41.5 355.64h5M583.0999999999999 355.64h-5M307.29999999999995 355.64h10M41.5 366.46h5M583.0999999999999 366.46h-5M307.29999999999995 366.46h10M41.5 377.28h5M583.0999999999999 377.28h-5M307.29999999999995 377.28h10M41.5 388.10h11M583.0999999999999 388.10h-11M304.29999999999995 388.10h16M41.5 398.92h5M583.0999999999999 398.92h-5M307.29999999999995 398.92h10M41.5 409.74h5M583.0999999999999 409.74h-5M307.29999999999995 409.74h10M41.5 420.56h5M583.0999999999999 420.56h-5M307.29999999999995 420.56h10M41.5 431.38h5M583.0999999999999 431.38h-5M307.29999999999995 431.38h10M41.5 442.20h11M583.0999999999999 442.20h-11M304.29999999999995 442.20h16M41.5 453.02h5M583.0999999999999 453.02h-5M307.29999999999995 453.02h10M41.5 463.84h5M583.0999999999999 463.84h-5M307.29999999999995 463.84h10M41.5 474.66h5M583.0999999999999 474.66h-5M307.29999999999995 474.66h10M41.5 485.48h5M583.0999999999999 485.48h-5M307.29999999999995 485.48h10" stroke="#ffffb0" stroke-width="1.1" fill="none" opacity="0.35" clip-path="url(#wclip)"/><clipPath id="wclip"><rect x="41" y="226" width="543" height="136"/></clipPath><path d="M58.9 63.6H69.4L64.2 69.4Z" fill="#ff6a28"/><rect x="18" y="434" width="23.5" height="15.5" fill="#fff000"/><path d="M28.6 438.6V448.2M28.6 438.8L26.2 440.8" stroke="#000" stroke-width="1.3" fill="none"/><path d="M33.5 442.5H38" stroke="#000" stroke-width="1.2"/><path d="M36 439.5L41 442.5L36 445.5Z" fill="#000"/><rect x="586" y="253.2" width="122" height="1.6" fill="#a6a6ae"/><rect x="586" y="318.4" width="122" height="1.6" fill="#a6a6ae"/><rect x="586" y="383.6" width="122" height="1.6" fill="#a6a6ae"/><path d="M408.5 522.5L410.6 522.5L412.4 517L414 517" stroke="#dcdcdc" stroke-width="1" fill="none"/>
<text x="25.1" y="36.9" font-family="Liberation Sans" font-size="11" fill="#000"  letter-spacing="0.3"><tspan text-decoration="underline">F</tspan>ile</text><text x="58.3" y="36.9" font-family="Liberation Sans" font-size="11" fill="#000"  letter-spacing="0.3"><tspan text-decoration="underline">E</tspan>dit</text><text x="94.5" y="36.9" font-family="Liberation Sans" font-size="11" fill="#000"  letter-spacing="0.3"><tspan text-decoration="underline">V</tspan>ertical</text><text x="148.3" y="36.9" font-family="Liberation Sans" font-size="11" fill="#000"  letter-spacing="0.3">H<tspan text-decoration="underline">o</tspan>riz/Acq</text><text x="214.5" y="36.9" font-family="Liberation Sans" font-size="11" fill="#000"  letter-spacing="0.3"><tspan text-decoration="underline">T</tspan>rig</text><text x="250.1" y="36.9" font-family="Liberation Sans" font-size="11" fill="#000"  letter-spacing="0.3"><tspan text-decoration="underline">D</tspan>isplay</text><text x="300.1" y="36.9" font-family="Liberation Sans" font-size="11" fill="#000"  letter-spacing="0.3"><tspan text-decoration="underline">C</tspan>ursors</text><text x="356.3" y="36.9" font-family="Liberation Sans" font-size="11" fill="#000"  letter-spacing="0.3">Mea<tspan text-decoration="underline">s</tspan>ure</text><text x="416.5" y="36.9" font-family="Liberation Sans" font-size="11" fill="#000"  letter-spacing="0.3">M<tspan text-decoration="underline">a</tspan>sks</text><text x="464.5" y="36.9" font-family="Liberation Sans" font-size="11" fill="#000"  letter-spacing="0.3"><tspan text-decoration="underline">M</tspan>ath</text><text x="503.7" y="36.9" font-family="Liberation Sans" font-size="11" fill="#000"  letter-spacing="0.3">M<tspan text-decoration="underline">y</tspan>Scope</text><text x="562.8" y="36.9" font-family="Liberation Sans" font-size="11" fill="#000"  letter-spacing="0.3"><tspan text-decoration="underline">U</tspan>tilities</text><text x="615.9" y="36.9" font-family="Liberation Sans" font-size="11" fill="#000"  letter-spacing="0.3"><tspan text-decoration="underline">H</tspan>elp</text><text x="19.5" y="59.5" font-family="Liberation Sans" font-size="13.6" fill="#b4cae6" textLength="18.5" lengthAdjust="spacingAndGlyphs">Tek</text><text x="59.5" y="59.5" font-family="Liberation Sans" font-size="13.6" fill="#b4cae6" textLength="42" lengthAdjust="spacingAndGlyphs">Stopped</text><text x="233.5" y="59.5" font-family="Liberation Sans" font-size="13.6" fill="#b4cae6" textLength="53" lengthAdjust="spacingAndGlyphs">1612 Acqs</text><text x="449.5" y="59.5" font-family="Liberation Sans" font-size="13.6" fill="#b4cae6" textLength="101.5" lengthAdjust="spacingAndGlyphs">10 May 19 17:49:22</text><text x="661" y="67.8" font-family="Liberation Sans" font-size="11" fill="#101010"  letter-spacing="0.35">Buttons</text><text x="585.4" y="202.6" font-family="Liberation Sans" font-size="11" fill="#dee458" stroke="#dee458" stroke-width="0.25" >Mean(C1)</text><text x="656.6" y="202.6" font-family="Liberation Sans" font-size="11" fill="#dee458" stroke="#dee458" stroke-width="0.25" letter-spacing="0.42">317.8mA</text><text x="585.4" y="216.6" font-family="Liberation Sans" font-size="11" fill="#dee458" stroke="#dee458" stroke-width="0.25" >μ:</text><text x="601.8" y="216.6" font-family="Liberation Sans" font-size="11" fill="#dee458" stroke="#dee458" stroke-width="0.25" letter-spacing="0.42">271.86382m</text><text x="585.4" y="230.79999999999998" font-family="Liberation Sans" font-size="11" fill="#dee458" stroke="#dee458" stroke-width="0.25" >m:</text><text x="601.8" y="230.79999999999998" font-family="Liberation Sans" font-size="11" fill="#dee458" stroke="#dee458" stroke-width="0.25" letter-spacing="0.42">-192.3m</text><text x="656.6" y="230.79999999999998" font-family="Liberation Sans" font-size="11" fill="#dee458" stroke="#dee458" stroke-width="0.25" >M:</text><text x="672.4" y="230.79999999999998" font-family="Liberation Sans" font-size="11" fill="#dee458" stroke="#dee458" stroke-width="0.25" letter-spacing="0.42">432.6m</text><text x="585.4" y="244.39999999999998" font-family="Liberation Sans" font-size="11" fill="#dee458" stroke="#dee458" stroke-width="0.25" >σ:</text><text x="601.8" y="244.39999999999998" font-family="Liberation Sans" font-size="11" fill="#dee458" stroke="#dee458" stroke-width="0.25" letter-spacing="0.42">94.3m</text><text x="656.6" y="244.39999999999998" font-family="Liberation Sans" font-size="11" fill="#dee458" stroke="#dee458" stroke-width="0.25" >n:</text><text x="674.4" y="244.39999999999998" font-family="Liberation Sans" font-size="11" fill="#dee458" stroke="#dee458" stroke-width="0.25" letter-spacing="0.42">1.613k</text><text x="585.4" y="267.8" font-family="Liberation Sans" font-size="11" fill="#dee458" stroke="#dee458" stroke-width="0.25" >RMS(C1)</text><text x="656.6" y="267.8" font-family="Liberation Sans" font-size="11" fill="#dee458" stroke="#dee458" stroke-width="0.25" letter-spacing="0.42">330.1mA</text><text x="585.4" y="281.8" font-family="Liberation Sans" font-size="11" fill="#dee458" stroke="#dee458" stroke-width="0.25" >μ:</text><text x="601.8" y="281.8" font-family="Liberation Sans" font-size="11" fill="#dee458" stroke="#dee458" stroke-width="0.25" letter-spacing="0.42">280.79694m</text><text x="585.4" y="296.0" font-family="Liberation Sans" font-size="11" fill="#dee458" stroke="#dee458" stroke-width="0.25" >m:</text><text x="601.8" y="296.0" font-family="Liberation Sans" font-size="11" fill="#dee458" stroke="#dee458" stroke-width="0.25" letter-spacing="0.42">3.48m</text><text x="656.6" y="296.0" font-family="Liberation Sans" font-size="11" fill="#dee458" stroke="#dee458" stroke-width="0.25" >M:</text><text x="672.4" y="296.0" font-family="Liberation Sans" font-size="11" fill="#dee458" stroke="#dee458" stroke-width="0.25" letter-spacing="0.42">449.9m</text><text x="585.4" y="309.6" font-family="Liberation Sans" font-size="11" fill="#dee458" stroke="#dee458" stroke-width="0.25" >σ:</text><text x="601.8" y="309.6" font-family="Liberation Sans" font-size="11" fill="#dee458" stroke="#dee458" stroke-width="0.25" letter-spacing="0.42">100.1m</text><text x="656.6" y="309.6" font-family="Liberation Sans" font-size="11" fill="#dee458" stroke="#dee458" stroke-width="0.25" >n:</text><text x="674.4" y="309.6" font-family="Liberation Sans" font-size="11" fill="#dee458" stroke="#dee458" stroke-width="0.25" letter-spacing="0.42">1.613k</text><text x="585.4" y="333.0" font-family="Liberation Sans" font-size="11" fill="#dee458" stroke="#dee458" stroke-width="0.25" >Max(C1)</text><text x="656.6" y="333.0" font-family="Liberation Sans" font-size="11" fill="#dee458" stroke="#dee458" stroke-width="0.25" letter-spacing="0.42">420.0mA</text><text x="585.4" y="347.0" font-family="Liberation Sans" font-size="11" fill="#dee458" stroke="#dee458" stroke-width="0.25" >μ:</text><text x="601.8" y="347.0" font-family="Liberation Sans" font-size="11" fill="#dee458" stroke="#dee458" stroke-width="0.25" letter-spacing="0.42">464.89514m</text><text x="585.4" y="361.2" font-family="Liberation Sans" font-size="11" fill="#dee458" stroke="#dee458" stroke-width="0.25" >m:</text><text x="601.8" y="361.2" font-family="Liberation Sans" font-size="11" fill="#dee458" stroke="#dee458" stroke-width="0.25" letter-spacing="0.42">-164.0m</text><text x="656.6" y="361.2" font-family="Liberation Sans" font-size="11" fill="#dee458" stroke="#dee458" stroke-width="0.25" >M:</text><text x="672.4" y="361.2" font-family="Liberation Sans" font-size="11" fill="#dee458" stroke="#dee458" stroke-width="0.25" letter-spacing="0.42">664.0m</text><text x="585.4" y="374.8" font-family="Liberation Sans" font-size="11" fill="#dee458" stroke="#dee458" stroke-width="0.25" >σ:</text><text x="601.8" y="374.8" font-family="Liberation Sans" font-size="11" fill="#dee458" stroke="#dee458" stroke-width="0.25" letter-spacing="0.42">109.4m</text><text x="656.6" y="374.8" font-family="Liberation Sans" font-size="11" fill="#dee458" stroke="#dee458" stroke-width="0.25" >n:</text><text x="674.4" y="374.8" font-family="Liberation Sans" font-size="11" fill="#dee458" stroke="#dee458" stroke-width="0.25" letter-spacing="0.42">1.613k</text><text x="585.4" y="398.20000000000005" font-family="Liberation Sans" font-size="11" fill="#dee458" stroke="#dee458" stroke-width="0.25" >Pk-Pk(C1)</text><text x="656.6" y="398.20000000000005" font-family="Liberation Sans" font-size="11" fill="#dee458" stroke="#dee458" stroke-width="0.25" letter-spacing="0.42">312.0mA</text><text x="585.4" y="412.20000000000005" font-family="Liberation Sans" font-size="11" fill="#dee458" stroke="#dee458" stroke-width="0.25" >μ:</text><text x="601.8" y="412.20000000000005" font-family="Liberation Sans" font-size="11" fill="#dee458" stroke="#dee458" stroke-width="0.25" letter-spacing="0.42">332.49878m</text><text x="585.4" y="426.40000000000003" font-family="Liberation Sans" font-size="11" fill="#dee458" stroke="#dee458" stroke-width="0.25" >m:</text><text x="601.8" y="426.40000000000003" font-family="Liberation Sans" font-size="11" fill="#dee458" stroke="#dee458" stroke-width="0.25" letter-spacing="0.42">28.0m</text><text x="656.6" y="426.40000000000003" font-family="Liberation Sans" font-size="11" fill="#dee458" stroke="#dee458" stroke-width="0.25" >M:</text><text x="672.4" y="426.40000000000003" font-family="Liberation Sans" font-size="11" fill="#dee458" stroke="#dee458" stroke-width="0.25" letter-spacing="0.42">720.0m</text><text x="585.4" y="440.00000000000006" font-family="Liberation Sans" font-size="11" fill="#dee458" stroke="#dee458" stroke-width="0.25" >σ:</text><text x="601.8" y="440.00000000000006" font-family="Liberation Sans" font-size="11" fill="#dee458" stroke="#dee458" stroke-width="0.25" letter-spacing="0.42">87.2m</text><text x="656.6" y="440.00000000000006" font-family="Liberation Sans" font-size="11" fill="#dee458" stroke="#dee458" stroke-width="0.25" >n:</text><text x="674.4" y="440.00000000000006" font-family="Liberation Sans" font-size="11" fill="#dee458" stroke="#dee458" stroke-width="0.25" letter-spacing="0.42">1.613k</text><text x="41.5" y="511.2" font-family="Liberation Sans" font-size="11" fill="#dee458" stroke="#dee458" stroke-width="0.25" >Ch1</text><text x="86" y="511.2" font-family="Liberation Sans" font-size="11" fill="#dee458" stroke="#dee458" stroke-width="0.25" >100mA</text><text x="131.2" y="511.2" font-family="Liberation Sans" font-size="11" fill="#dee458" stroke="#dee458" stroke-width="0.25" >Ω</text><text x="366.3" y="510.9" font-family="Liberation Sans" font-size="11" fill="#dcdcdc"  letter-spacing="0.18">M 200ms 25.0kS/s</text><text x="484.2" y="510.9" font-family="Liberation Sans" font-size="11" fill="#dcdcdc"  letter-spacing="0.22">40.0μs/pt</text><text x="366.3" y="523.1" font-family="Liberation Sans" font-size="11" fill="#dcdcdc" stroke="#dcdcdc" stroke-width="0.2" >A</text><text x="379.5" y="523.1" font-family="Liberation Sans" font-size="11" fill="#dee458" stroke="#dee458" stroke-width="0.25" >Ch1</text><text x="421.3" y="523.1" font-family="Liberation Sans" font-size="11" fill="#dcdcdc" stroke="#dcdcdc" stroke-width="0.2" >284mA</text><rect x="708.4" y="188" width="1.6" height="352" fill="#000"/><rect x="710" y="0" width="13" height="570" fill="#fff"/><text x="361.9" y="554.8" text-anchor="middle" font-family="Liberation Serif" font-size="16.8" fill="#000" stroke="#000" stroke-width="0.25">5G HT40 Ch64, TX mode current wave form (VCC 5V)</text>
</svg>
</body></html>
